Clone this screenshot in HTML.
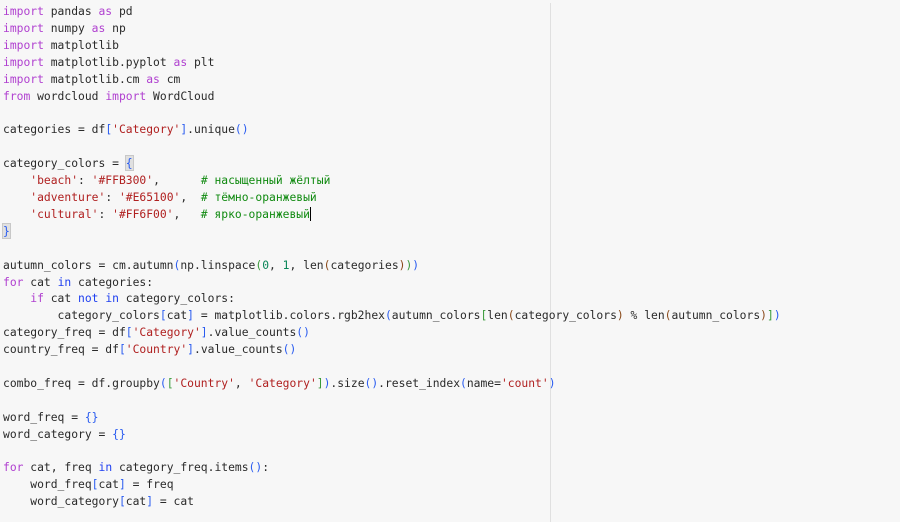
<!DOCTYPE html>
<html><head><meta charset="utf-8"><style>
html,body{margin:0;padding:0;background:#f7f7f7;width:900px;height:522px;overflow:hidden}
body{position:relative}
.vl{position:absolute;left:550px;top:3px;width:1px;height:519px;background:#e0e0e0}
pre{position:absolute;left:3px;top:3px;margin:0;font-family:"DejaVu Sans Mono","Liberation Mono",monospace;font-size:11.33px;line-height:16.9px;color:#2a2a2a}
.k{color:#b040d0}.b{color:#2040f0}.s{color:#b02020}.c{color:#108a10}.n{color:#098658}
.p1{color:#2a5cf0}.p2{color:#3a9a3a}.p3{color:#8a4a1a}
.hl{background:#e0e0e0;outline:1px solid #c8c8c8}
.cur{border-right:1.5px solid #000}
</style></head><body><div class="vl"></div><pre><span class="k">import</span> pandas <span class="k">as</span> pd
<span class="k">import</span> numpy <span class="k">as</span> np
<span class="k">import</span> matplotlib
<span class="k">import</span> matplotlib.pyplot <span class="k">as</span> plt
<span class="k">import</span> matplotlib.cm <span class="k">as</span> cm
<span class="k">from</span> wordcloud <span class="k">import</span> WordCloud

categories = df<span class="p1">[</span><span class="s">'Category'</span><span class="p1">]</span>.unique<span class="p1">()</span>

category_colors = <span class="p1 hl">{</span>
    <span class="s">'beach'</span>: <span class="s">'#FFB300'</span>,      <span class="c"># насыщенный жёлтый</span>
    <span class="s">'adventure'</span>: <span class="s">'#E65100'</span>,  <span class="c"># тёмно-оранжевый</span>
    <span class="s">'cultural'</span>: <span class="s">'#FF6F00'</span>,   <span class="c cur"># ярко-оранжевый</span>
<span class="p1 hl">}</span>

autumn_colors = cm.autumn<span class="p1">(</span>np.linspace<span class="p2">(</span><span class="n">0</span>, <span class="n">1</span>, len<span class="p3">(</span>categories<span class="p3">)</span><span class="p2">)</span><span class="p1">)</span>
<span class="k">for</span> cat <span class="b">in</span> categories:
    <span class="k">if</span> cat <span class="b">not</span> <span class="b">in</span> category_colors:
        category_colors<span class="p1">[</span>cat<span class="p1">]</span> = matplotlib.colors.rgb2hex<span class="p1">(</span>autumn_colors<span class="p2">[</span>len<span class="p3">(</span>category_colors<span class="p3">)</span> % len<span class="p3">(</span>autumn_colors<span class="p3">)</span><span class="p2">]</span><span class="p1">)</span>
category_freq = df<span class="p1">[</span><span class="s">'Category'</span><span class="p1">]</span>.value_counts<span class="p1">()</span>
country_freq = df<span class="p1">[</span><span class="s">'Country'</span><span class="p1">]</span>.value_counts<span class="p1">()</span>

combo_freq = df.groupby<span class="p1">(</span><span class="p2">[</span><span class="s">'Country'</span>, <span class="s">'Category'</span><span class="p2">]</span><span class="p1">)</span>.size<span class="p1">()</span>.reset_index<span class="p1">(</span>name=<span class="s">'count'</span><span class="p1">)</span>

word_freq = <span class="p1">{}</span>
word_category = <span class="p1">{}</span>

<span class="k">for</span> cat, freq <span class="b">in</span> category_freq.items<span class="p1">()</span>:
    word_freq<span class="p1">[</span>cat<span class="p1">]</span> = freq
    word_category<span class="p1">[</span>cat<span class="p1">]</span> = cat
</pre></body></html>
